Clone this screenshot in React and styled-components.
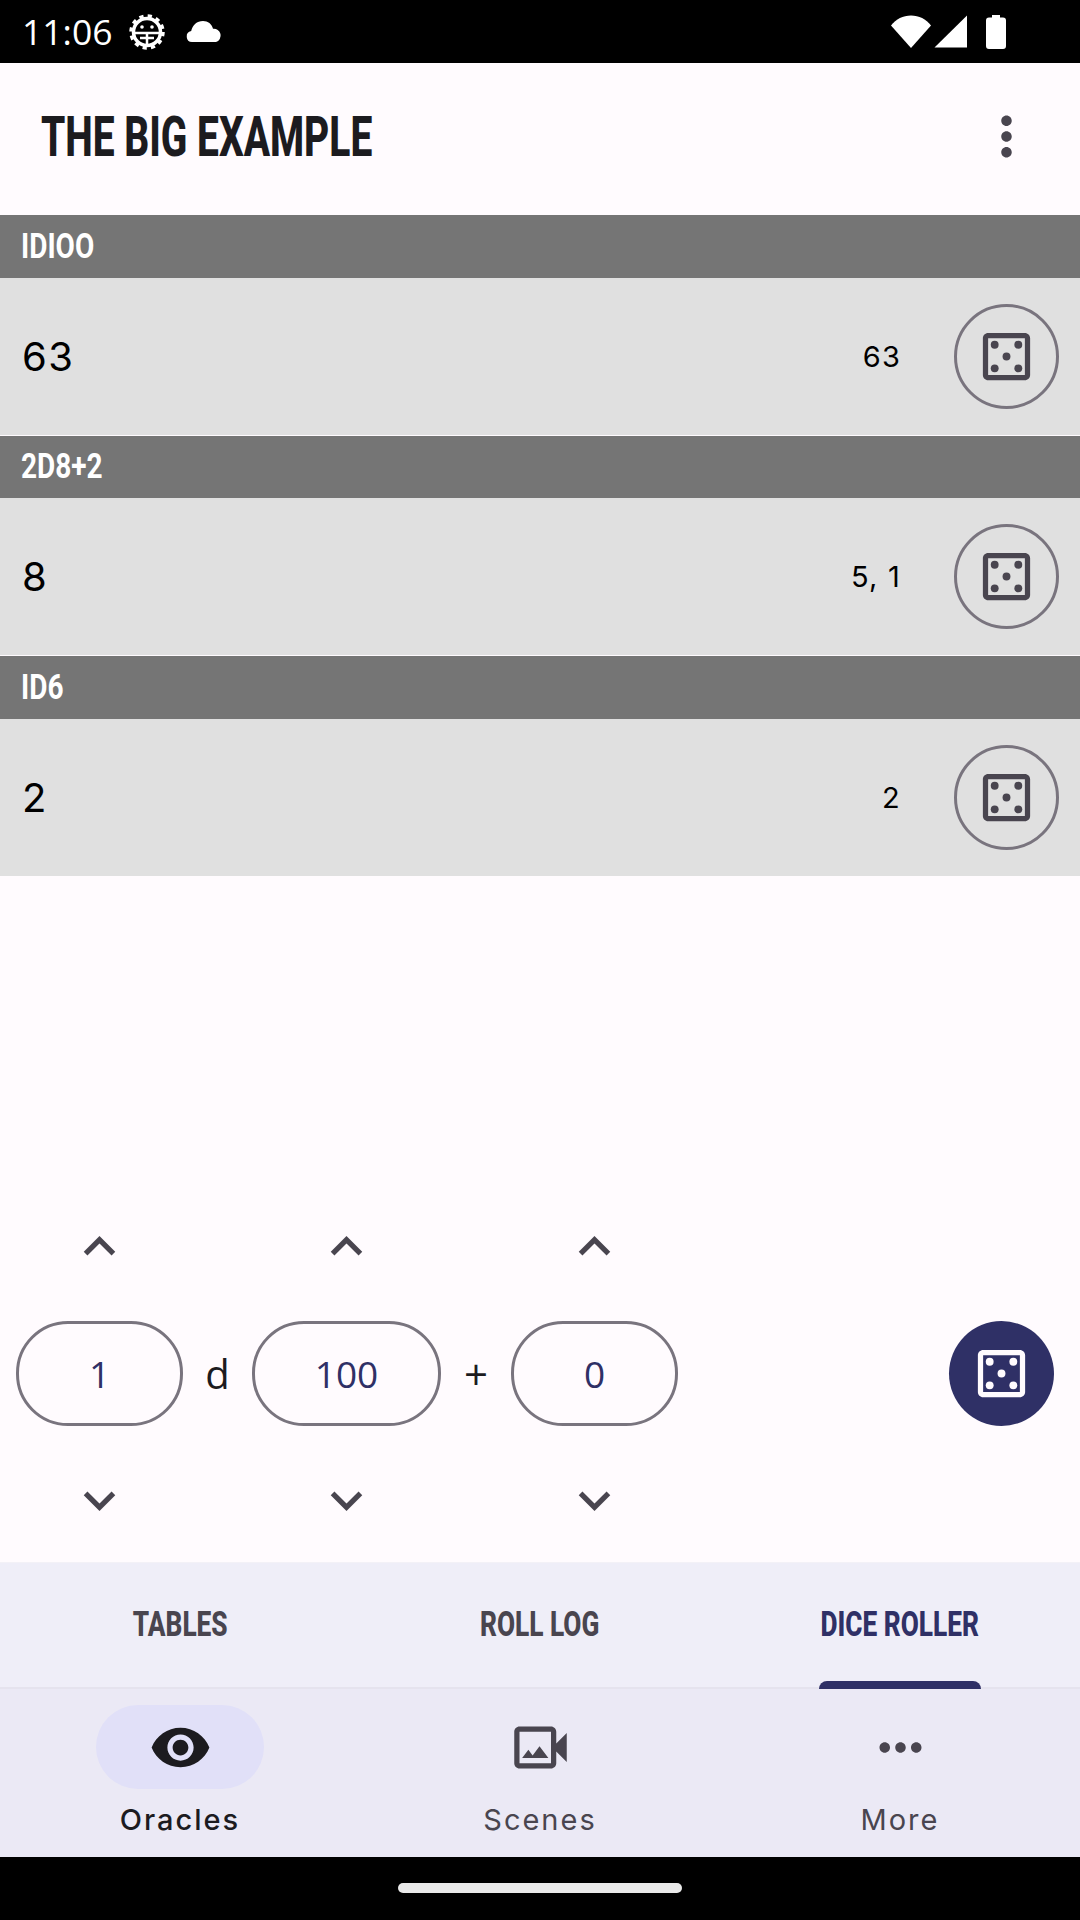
import React from 'react'
import styled, { createGlobalStyle } from 'styled-components'
import {
  MdOutlineCasino,
  MdMoreVert,
  MdMoreHoriz,
  MdKeyboardArrowUp,
  MdKeyboardArrowDown,
  MdVisibility,
  MdOutlineVideoCameraBack,
} from 'react-icons/md'

const GlobalStyle = createGlobalStyle`
  html, body {
    margin: 0;
    padding: 0;
    background: #fffbfe;
  }
  * {
    box-sizing: border-box;
  }
`

const Screen = styled.div`
  width: 1080px;
  height: 1920px;
  display: flex;
  flex-direction: column;
  overflow: hidden;
  background: #fffbfe;
  font-family: 'Open Sans', sans-serif;
`

const StatusBar = styled.div`
  height: 63px;
  flex: none;
  display: flex;
  align-items: center;
  padding: 0 74px 0 22px;
  background: #000;
  color: #fff;
`

const Clock = styled.span`
  font-family: 'Open Sans', sans-serif;
  font-size: 35.5px;
  font-weight: 400;
  line-height: 63px;
  width: 107px;
`

const StatusRight = styled.div`
  margin-left: auto;
  display: flex;
  align-items: center;
`

const AppBar = styled.div`
  height: 152px;
  flex: none;
  display: flex;
  align-items: center;
  justify-content: space-between;
  padding: 0 42px 5px 41px;
  color: #1c1b1f;
`

const Title = styled.h1`
  margin: 0;
  font-family: 'Roboto', sans-serif;
  font-size: 56px;
  font-weight: 800;
  line-height: 1;
  white-space: nowrap;
  display: inline-block;
  transform: scaleX(0.695);
  transform-origin: left center;
`

const Group = styled.section`
  height: 220.5px;
  flex: none;
  display: flex;
  flex-direction: column;
  padding-bottom: 1px;
`

const GroupHeader = styled.div`
  height: 62.5px;
  flex: none;
  display: flex;
  align-items: center;
  padding-left: 21px;
  background: #757575;
  color: #fff;
`

const GroupLabel = styled.span`
  font-family: 'Roboto', sans-serif;
  font-size: 35px;
  font-weight: 700;
  line-height: 1;
  display: inline-block;
  transform: scaleX(0.8);
  transform-origin: left center;
`

const ResultRow = styled.div`
  flex: 1;
  display: flex;
  align-items: center;
  padding: 0 21px 0 22px;
  background: #e0e0e0;
  color: #000;
  font-family: 'Inter', sans-serif;
`

const Total = styled.span`
  font-size: 40px;
  font-weight: 400;
  letter-spacing: 1.5px;
`

const Detail = styled.span`
  margin-left: auto;
  margin-right: 53px;
  font-size: 29px;
  font-weight: 400;
  letter-spacing: 1.2px;
`

const RerollButton = styled.button`
  width: 105px;
  height: 105px;
  flex: none;
  padding: 0;
  display: flex;
  align-items: center;
  justify-content: center;
  background: transparent;
  border: 3px solid #79747e;
  border-radius: 50%;
  color: #49454f;
`

const Spacer = styled.div`
  flex: 1;
`

const Roller = styled.div`
  flex: none;
  display: flex;
  align-items: center;
  padding: 0 26px 30px 16px;
`

const Stepper = styled.div`
  display: flex;
  flex-direction: column;
  align-items: center;
  gap: 43px;
`

const ChevronBox = styled.div`
  height: 63px;
  display: flex;
  align-items: center;
  justify-content: center;
  color: #49454f;
`

const NumberPill = styled.div`
  width: ${p => p.$width}px;
  height: 105px;
  display: flex;
  align-items: center;
  justify-content: center;
  border: 3px solid #79747e;
  border-radius: 52px;
  color: #2f3066;
  font-size: 37px;
`

const Operator = styled.span`
  width: ${p => p.$width}px;
  text-align: center;
  color: #1c1b1f;
  font-size: ${p => p.$size}px;
`

const Fab = styled.button`
  width: 105px;
  height: 105px;
  margin-left: auto;
  padding: 0;
  display: flex;
  align-items: center;
  justify-content: center;
  border: none;
  border-radius: 50%;
  background: #2f3066;
  color: #fffbfe;
`

const TabBar = styled.div`
  height: 125px;
  flex: none;
  display: grid;
  grid-template-columns: repeat(3, 1fr);
  background: #efeef8;
  border-top: 1px solid #f3f1f7;
`

const Tab = styled.div`
  position: relative;
  display: flex;
  align-items: center;
  justify-content: center;
  padding-bottom: 2px;
  color: ${p => (p.$active ? '#2f3066' : '#49454f')};
`

const TabLabel = styled.span`
  font-family: 'Roboto', sans-serif;
  font-size: 35px;
  font-weight: 800;
  line-height: 1;
  white-space: nowrap;
  display: inline-block;
  transform: scaleX(0.75);
`

const TabIndicator = styled.div`
  position: absolute;
  left: 99px;
  right: 99px;
  bottom: -2px;
  height: 8px;
  border-radius: 8px 8px 0 0;
  background: #2f3066;
`

const NavBar = styled.nav`
  height: 170px;
  flex: none;
  display: grid;
  grid-template-columns: repeat(3, 1fr);
  padding-top: 16px;
  background: #ebe9f5;
  border-top: 2.5px solid #e5e3ee;
`

const NavItem = styled.div`
  display: flex;
  flex-direction: column;
  align-items: center;
  color: ${p => (p.$active ? '#1c1b1f' : '#49454f')};
`

const NavIcon = styled.div`
  width: 168px;
  height: 84px;
  display: flex;
  align-items: center;
  justify-content: center;
  border-radius: 42px;
  background: ${p => (p.$active ? '#e1e0f8' : 'transparent')};
`

const NavLabel = styled.span`
  margin-top: 12px;
  font-family: 'Inter', sans-serif;
  font-size: 29px;
  font-weight: ${p => (p.$active ? 500 : 400)};
  letter-spacing: 2px;
  line-height: 38px;
`

const GestureBar = styled.div`
  height: 63px;
  flex: none;
  display: flex;
  align-items: center;
  justify-content: center;
  padding-bottom: 1px;
  background: #000;
`

const GestureHandle = styled.div`
  width: 284px;
  height: 10px;
  border-radius: 5px;
  background: #eaeaea;
`

const DebugIcon = () => (
  <svg width="38" height="38" viewBox="0 0 38 38" fill="none" style={{ marginRight: 20, marginLeft: -1 }}>
    <circle cx="19" cy="19" r="13.5" stroke="#fff" strokeWidth="3.5" />
    <circle cx="19" cy="19" r="16" stroke="#fff" strokeWidth="3.5" strokeDasharray="4.2 4.2" />
    <path d="M6 20h26M19 20v12M12 25h14" stroke="#fff" strokeWidth="2.5" />
    <circle cx="14" cy="14" r="1.8" fill="#fff" />
    <circle cx="24" cy="14" r="1.8" fill="#fff" />
  </svg>
)

const CloudIcon = () => (
  <svg width="36" height="21" viewBox="0 0 36 21" style={{ marginTop: 0 }}>
    <path d="M6 21a5.5 5.5 0 0 1-.8-10.9C6.5 4 11 0 17 0c5 0 8.8 3 10 7.8A6.8 6.8 0 0 1 30 21H6z" fill="#fff" />
  </svg>
)

const WifiIcon = () => (
  <svg width="40" height="33" viewBox="0 0 40 33" style={{ marginRight: 3 }}>
    <path d="M0 10.5C5 4 12 .5 20 .5s15 3.5 20 10L20 33 0 10.5z" fill="#fff" />
  </svg>
)

const SignalIcon = () => (
  <svg width="33" height="33" viewBox="0 0 33 33" style={{ marginRight: 19 }}>
    <path d="M33 .5V32.500H.5L33 .5z" fill="#fff" />
  </svg>
)

const BatteryIcon = () => (
  <svg width="20" height="34" viewBox="0 0 20 34">
    <path d="M6 0h8v2.5h3a3 3 0 0 1 3 3V31a3 3 0 0 1-3 3H3a3 3 0 0 1-3-3V5.500a3 3 0 0 1 3-3h3V0z" fill="#fff" />
  </svg>
)

const groups = [
  { label: '1D100', display: 'IDIOO', total: '63', detail: '63' },
  { label: '2D8+2', display: '2D8+2', total: '8', detail: '5, 1' },
  { label: '1D6', display: 'ID6', total: '2', detail: '2' },
]

const tabs = ['TABLES', 'ROLL LOG', 'DICE ROLLER']

const NumberStepper = ({ value, width }) => (
  <Stepper>
    <ChevronBox>
      <MdKeyboardArrowUp size={63} />
    </ChevronBox>
    <NumberPill $width={width}>{value}</NumberPill>
    <ChevronBox>
      <MdKeyboardArrowDown size={63} />
    </ChevronBox>
  </Stepper>
)

export default function App() {
  return (
    <Screen>
      <GlobalStyle />
      <StatusBar>
        <Clock>11:06</Clock>
        <DebugIcon />
        <CloudIcon />
        <StatusRight>
          <WifiIcon />
          <SignalIcon />
          <BatteryIcon />
        </StatusRight>
      </StatusBar>

      <AppBar>
        <Title>THE BIG EXAMPLE</Title>
        <MdMoreVert size={63} color="#49454f" />
      </AppBar>

      {groups.map(({ label, display, total, detail }) => (
        <Group key={label}>
          <GroupHeader>
            <GroupLabel>{display}</GroupLabel>
          </GroupHeader>
          <ResultRow>
            <Total>{total}</Total>
            <Detail>{detail}</Detail>
            <RerollButton>
              <MdOutlineCasino size={63} />
            </RerollButton>
          </ResultRow>
        </Group>
      ))}

      <Spacer />

      <Roller>
        <NumberStepper value="1" width={167} />
        <Operator $width={69} $size={40}>d</Operator>
        <NumberStepper value="100" width={189} />
        <Operator $width={70} $size={42}>+</Operator>
        <NumberStepper value="0" width={167} />
        <Fab>
          <MdOutlineCasino size={63} />
        </Fab>
      </Roller>

      <TabBar>
        {tabs.map((tab, idx) => (
          <Tab key={tab} $active={idx === 2}>
            <TabLabel>{tab}</TabLabel>
            {idx === 2 && <TabIndicator />}
          </Tab>
        ))}
      </TabBar>

      <NavBar>
        <NavItem $active>
          <NavIcon $active>
            <MdVisibility size={63} />
          </NavIcon>
          <NavLabel $active>Oracles</NavLabel>
        </NavItem>
        <NavItem>
          <NavIcon>
            <MdOutlineVideoCameraBack size={63} />
          </NavIcon>
          <NavLabel>Scenes</NavLabel>
        </NavItem>
        <NavItem>
          <NavIcon>
            <MdMoreHoriz size={63} />
          </NavIcon>
          <NavLabel>More</NavLabel>
        </NavItem>
      </NavBar>

      <GestureBar>
        <GestureHandle />
      </GestureBar>
    </Screen>
  )
}
